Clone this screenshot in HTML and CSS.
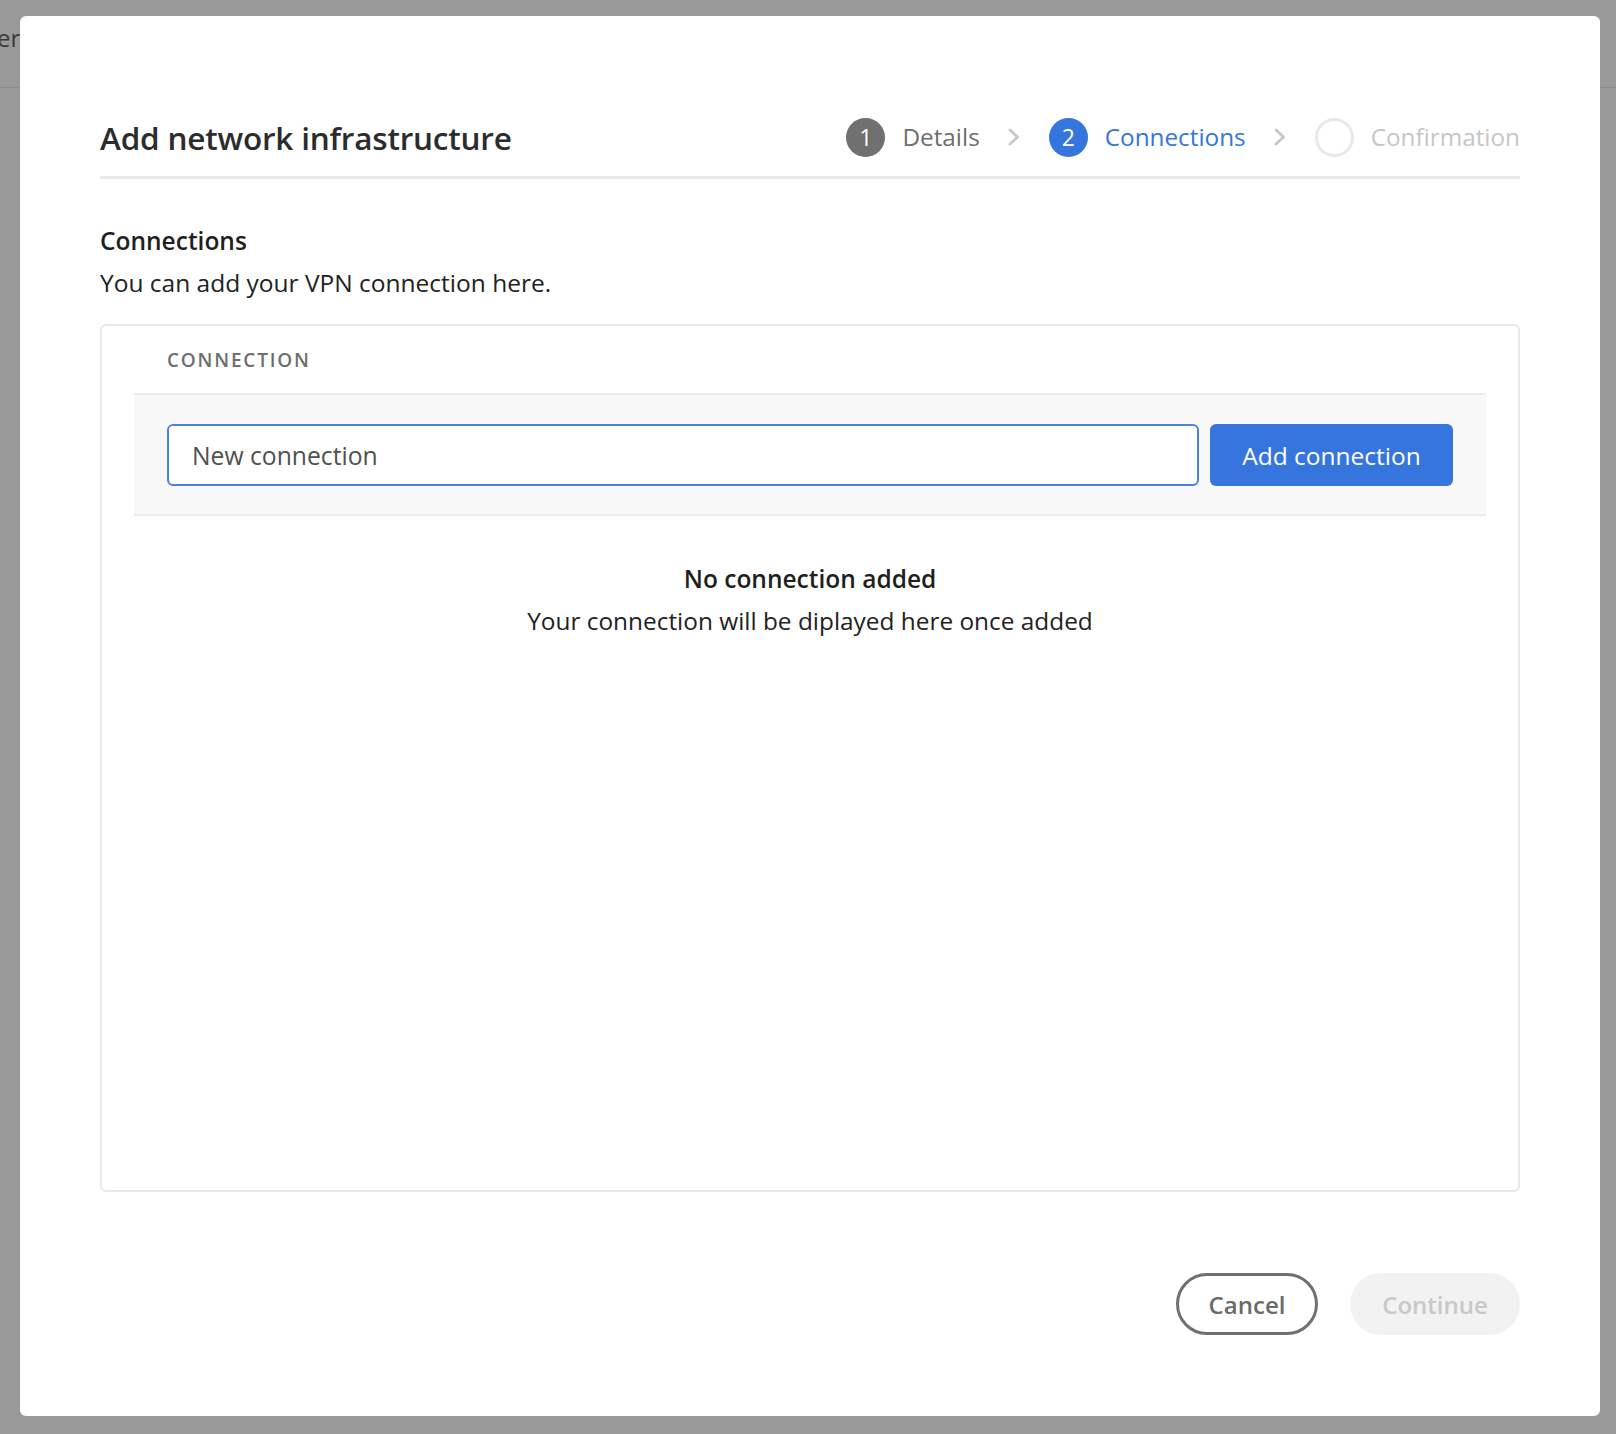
FILE: index.html
```html
<!DOCTYPE html>
<html lang="en">
<head>
<meta charset="utf-8">
<title>Add network infrastructure</title>
<link rel="stylesheet" href="styles.css">
</head>
<body>
<div class="page">
  <div class="page-header"><span class="page-title">er</span></div>
</div>
<div class="overlay">
  <div class="dialog" role="dialog" aria-labelledby="dlg-title">
    <header class="dialog-header">
      <h1 class="dialog-title" id="dlg-title">Add network infrastructure</h1>
      <ol class="stepper">
        <li class="step step-done"><span class="step-circle">1</span><span class="step-label">Details</span></li>
        <li class="step-sep"><svg width="12" height="18" viewBox="0 0 12 18"><polyline points="2,2 9.5,9 2,16" fill="none" stroke="#c8c8c8" stroke-width="3" stroke-linecap="round" stroke-linejoin="round"/></svg></li>
        <li class="step step-current"><span class="step-circle">2</span><span class="step-label">Connections</span></li>
        <li class="step-sep"><svg width="12" height="18" viewBox="0 0 12 18"><polyline points="2,2 9.5,9 2,16" fill="none" stroke="#c8c8c8" stroke-width="3" stroke-linecap="round" stroke-linejoin="round"/></svg></li>
        <li class="step step-todo"><span class="step-circle"></span><span class="step-label">Confirmation</span></li>
      </ol>
    </header>

    <section class="dialog-body">
      <h2 class="section-title">Connections</h2>
      <p class="section-desc">You can add your VPN connection here.</p>

      <div class="card">
        <div class="card-label">CONNECTION</div>
        <div class="add-row">
          <input class="text-input" type="text" placeholder="New connection">
          <button class="btn-primary" type="button">Add connection</button>
        </div>
        <div class="empty">
          <div class="empty-title">No connection added</div>
          <div class="empty-text">Your connection will be diplayed here once added</div>
        </div>
      </div>
    </section>

    <footer class="dialog-footer">
      <button class="btn-secondary" type="button">Cancel</button>
      <button class="btn-disabled" type="button" disabled>Continue</button>
    </footer>
  </div>
</div>
</body>
</html>
```

FILE: styles.css
```css
html, body {
  margin: 0;
  padding: 0;
}
body {
  width: 1616px;
  height: 1434px;
  overflow: hidden;
  background: #999999;
  font-family: "Open Sans", "Noto Sans", sans-serif;
  color: #2c2c2c;
}
.page-header {
  height: 88px;
  border-bottom: 1px solid #8d8d8d;
  box-sizing: border-box;
  padding-top: 21px;
}
.page-title {
  display: inline-block;
  margin-left: -3px;
  font-size: 24px;
  color: #3a3a3a;
}

.overlay {
  position: fixed;
  inset: 0;
}
.dialog {
  position: absolute;
  left: 20px;
  top: 16px;
  width: 1580px;
  height: 1400px;
  box-sizing: border-box;
  background: #ffffff;
  border-radius: 6px;
  padding: 101px 80px 81px;
  display: flex;
  flex-direction: column;
}

/* header */
.dialog-header {
  display: flex;
  align-items: center;
  justify-content: space-between;
  height: 40px;
  padding-bottom: 19px;
  border-bottom: 3px solid #eaeaea;
}
.dialog-title {
  margin: 0;
  font-size: 31.5px;
  font-weight: 600;
  color: #2c2c2c;
  letter-spacing: -0.2px;
}
.stepper {
  list-style: none;
  margin: 0;
  padding: 0;
  display: flex;
  align-items: center;
}
.step {
  display: flex;
  align-items: center;
  gap: 17px;
}
.step-circle {
  width: 39px;
  height: 39px;
  border-radius: 50%;
  box-sizing: border-box;
  display: flex;
  align-items: center;
  justify-content: center;
  font-size: 23px;
  color: #ffffff;
}
.step-label {
  font-size: 24.3px;
  line-height: 32px;
}
.step-done .step-circle { background: #707070; }
.step-done .step-label { color: #6e6e6e; }
.step-current .step-circle { background: #3575de; }
.step-current .step-label { color: #3575de; }
.step-todo .step-circle { border: 3px solid #e8e8e8; }
.step-todo .step-label { color: #c6c6c6; }
.step-sep {
  display: flex;
  align-items: center;
  margin: 0 29px 0 28px;
}

/* body */
.dialog-body {
  flex: 1;
  display: flex;
  flex-direction: column;
  padding-top: 45px;
}
.section-title {
  margin: 0;
  font-size: 24.5px;
  line-height: 34px;
  font-weight: 600;
  color: #1f1f1f;
}
.section-desc {
  margin: 8px 0 0;
  font-size: 24.5px;
  line-height: 34px;
  color: #222222;
}
.card {
  flex: 1;
  margin-top: 24px;
  border: 2px solid #e8e8e8;
  border-radius: 6px;
  padding: 0 32px;
  display: flex;
  flex-direction: column;
}
.card-label {
  height: 67px;
  display: flex;
  align-items: center;
  padding-left: 33px;
  font-size: 19px;
  font-weight: 600;
  letter-spacing: 1.8px;
  color: #6e6e6e;
}
.add-row {
  display: flex;
  gap: 11px;
  padding: 29px 33px 28px;
  background: #f8f8f8;
  border-top: 2px solid #ebebeb;
  border-bottom: 2px solid #ebebeb;
}
.text-input {
  flex: 1;
  height: 62px;
  box-sizing: border-box;
  border: 2px solid #4a83e2;
  border-radius: 6px;
  background: #ffffff;
  padding: 0 23px;
  font-family: inherit;
  font-size: 24.7px;
  color: #2c2c2c;
  outline: none;
}
.text-input::placeholder {
  color: #505050;
  opacity: 1;
}
.btn-primary {
  width: 243px;
  height: 62px;
  border: none;
  border-radius: 6px;
  background: #3775de;
  color: #ffffff;
  font-family: inherit;
  font-size: 24.5px;
  padding: 0;
}
.empty {
  padding-top: 43px;
  text-align: center;
}
.empty-title {
  font-size: 24.5px;
  line-height: 40px;
  font-weight: 600;
  color: #1f1f1f;
}
.empty-text {
  margin-top: 2px;
  font-size: 24.4px;
  line-height: 40px;
  color: #222222;
}

/* footer */
.dialog-footer {
  margin-top: 81px;
  display: flex;
  justify-content: flex-end;
  gap: 32px;
}
.btn-secondary,
.btn-disabled {
  height: 62px;
  border-radius: 31px;
  font-family: inherit;
  font-size: 24px;
  font-weight: 600;
  padding: 0;
  box-sizing: border-box;
}
.btn-secondary {
  width: 142px;
  background: #ffffff;
  border: 3px solid #707070;
  color: #6a6a6a;
}
.btn-disabled {
  width: 170px;
  background: #f2f2f2;
  border: none;
  color: #c8c8c8;
}
```
